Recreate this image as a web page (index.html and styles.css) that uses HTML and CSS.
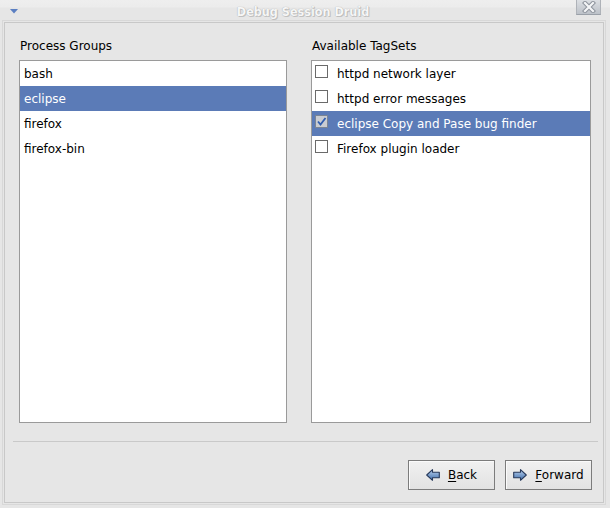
FILE: index.html
```html
<!DOCTYPE html>
<html>
<head>
<meta charset="utf-8">
<link rel="stylesheet" href="styles.css">
</head>
<body>
<div class="window">
  <div class="titlebar">
    <div class="tb-left">
      <svg class="menu-arrow" width="8" height="5" viewBox="0 0 8 5"><polygon points="0,0 8,0 4,4.5" fill="#5b7fc2"/></svg>
    </div>
    <div class="title">Debug Session Druid</div>
    <div class="tb-right">
      <div class="close-btn">
        <svg width="16" height="12" viewBox="0 0 16 12">
          <path d="M4 2 L12 10 M12 2 L4 10" stroke="#8d939c" stroke-width="4.2" stroke-linecap="square"/>
          <path d="M4 2 L12 10 M12 2 L4 10" stroke="#f4f5f7" stroke-width="2.2" stroke-linecap="square"/>
        </svg>
      </div>
    </div>
  </div>
  <div class="frame">
    <div class="columns">
      <div class="col">
        <div class="label">Process Groups</div>
        <div class="list">
          <div class="row">bash</div>
          <div class="row selected">eclipse</div>
          <div class="row">firefox</div>
          <div class="row">firefox-bin</div>
        </div>
      </div>
      <div class="col">
        <div class="label">Available TagSets</div>
        <div class="list">
          <div class="row check-row"><span class="cb"></span>httpd network layer</div>
          <div class="row check-row"><span class="cb"></span>httpd error messages</div>
          <div class="row check-row selected"><span class="cb checked"><svg width="11" height="11" viewBox="0 0 11 11"><path d="M2 5.5 L4.5 8.5 L9.5 2" fill="none" stroke="#2f5db0" stroke-width="1.8"/></svg></span>eclipse Copy and Pase bug finder</div>
          <div class="row check-row"><span class="cb"></span>Firefox plugin loader</div>
        </div>
      </div>
    </div>
    <div class="separator"></div>
    <div class="buttons">
      <button class="btn">
        <svg width="14" height="12" viewBox="0 0 14 12">
          <defs><linearGradient id="ga" x1="0" y1="0" x2="0" y2="1"><stop offset="0" stop-color="#b8d0ee"/><stop offset="1" stop-color="#3f6eab"/></linearGradient></defs>
          <polygon points="0.7,6 6.5,0.7 6.5,3.3 13.3,3.3 13.3,8.7 6.5,8.7 6.5,11.3" fill="url(#ga)" stroke="#26385a" stroke-width="1.1" stroke-linejoin="round"/>
        </svg>
        <span><u>B</u>ack</span>
      </button>
      <button class="btn">
        <svg width="14" height="12" viewBox="0 0 14 12">
          <defs><linearGradient id="gb" x1="0" y1="0" x2="0" y2="1"><stop offset="0" stop-color="#b8d0ee"/><stop offset="1" stop-color="#3f6eab"/></linearGradient></defs>
          <polygon points="13.3,6 7.5,0.7 7.5,3.3 0.7,3.3 0.7,8.7 7.5,8.7 7.5,11.3" fill="url(#gb)" stroke="#26385a" stroke-width="1.1" stroke-linejoin="round"/>
        </svg>
        <span><u>F</u>orward</span>
      </button>
    </div>
  </div>
</div>
</body>
</html>
```

FILE: styles.css
```css
* { box-sizing: border-box; }
html, body {
  margin: 0;
  padding: 0;
  background: #e6e6e6;
}
body {
  width: 610px;
  height: 508px;
  overflow: hidden;
  font-family: "DejaVu Sans", sans-serif;
  font-size: 12px;
  color: #000;
}
.window {
  width: 610px;
  height: 508px;
  display: flex;
  flex-direction: column;
  background: #e6e6e6;
}
.titlebar {
  height: 22px;
  display: grid;
  grid-template-columns: 1fr auto 1fr;
  background: linear-gradient(#eeeeee 0, #ececec 7px, #e6e6e6 8px, #e6e6e6 100%);
}
.tb-left {
  display: flex;
  align-items: flex-start;
  padding: 9px 0 0 10px;
}
.menu-arrow { display: block; }
.title {
  font-family: "DejaVu Sans Condensed", "DejaVu Sans", sans-serif;
  font-weight: bold;
  font-size: 12.5px;
  line-height: 22px;
  color: #f6f6f6;
  text-shadow: 0 0 1px #9c9c9c, 1px 1px 0 #c4c4c4;
  padding-top: 1px;
  padding-right: 4px;
}
.tb-right {
  display: flex;
  justify-content: flex-end;
  align-items: flex-start;
  padding-right: 9px;
}
.close-btn {
  width: 25px;
  height: 15px;
  display: flex;
  align-items: center;
  justify-content: center;
  background: linear-gradient(#dcdfe3, #bcc1c8);
  border-left: 1px solid #aeb2b8;
  border-bottom: 1px solid #9aa0a8;
  border-right: 1px solid #aeb2b8;
}
.frame {
  flex: 1;
  margin: 0 6px 5px 4px;
  border: 1px solid #c8c8c8;
  outline: 1px solid #d8d8d8;
  outline-offset: 1px;
  display: flex;
  flex-direction: column;
}
.columns {
  display: grid;
  grid-template-columns: 268px 280px;
  column-gap: 24px;
  padding: 15px 12px 0 14px;
}
.col {
  display: flex;
  flex-direction: column;
}
.label {
  line-height: 16px;
  height: 15px;
  margin-bottom: 7px;
  padding-left: 1px;
}
.list {
  height: 363px;
  background: #fff;
  border: 1px solid #9a9a9a;
}
.row {
  height: 25px;
  line-height: 26px;
  padding-left: 4px;
  white-space: nowrap;
}
.row.selected {
  background: #5b7bb7;
  color: #fff;
}
.check-row {
  display: flex;
  align-items: center;
  padding-left: 3px;
}
.cb {
  width: 13px;
  height: 13px;
  border: 1px solid #6a6a6a;
  background: #fff;
  margin-right: 9px;
  margin-top: -5px;
  display: flex;
  align-items: center;
  justify-content: center;
}
.cb.checked {
  background: #c9ccd2;
  border-color: #7a8494;
}
.cb svg { display: block; }
.separator {
  height: 1px;
  background: #c9c9c9;
  margin: 18px 5px 0 8px;
}
.buttons {
  display: flex;
  justify-content: flex-end;
  gap: 10px;
  margin-top: 18px;
  padding-right: 11px;
}
.btn {
  width: 87px;
  height: 30px;
  border: 1px solid #7c7c7c;
  background: linear-gradient(#f1f1f1, #e2e2e2);
  box-shadow: inset 1px 1px 0 #fbfbfb;
  font-family: "DejaVu Sans", sans-serif;
  font-size: 12px;
  color: #000;
  display: flex;
  align-items: center;
  justify-content: center;
  gap: 8px;
  padding: 0;
  margin: 0;
}
.btn svg { display: block; }
.btn u { text-decoration-thickness: 1px; text-underline-offset: 2px; }
```
